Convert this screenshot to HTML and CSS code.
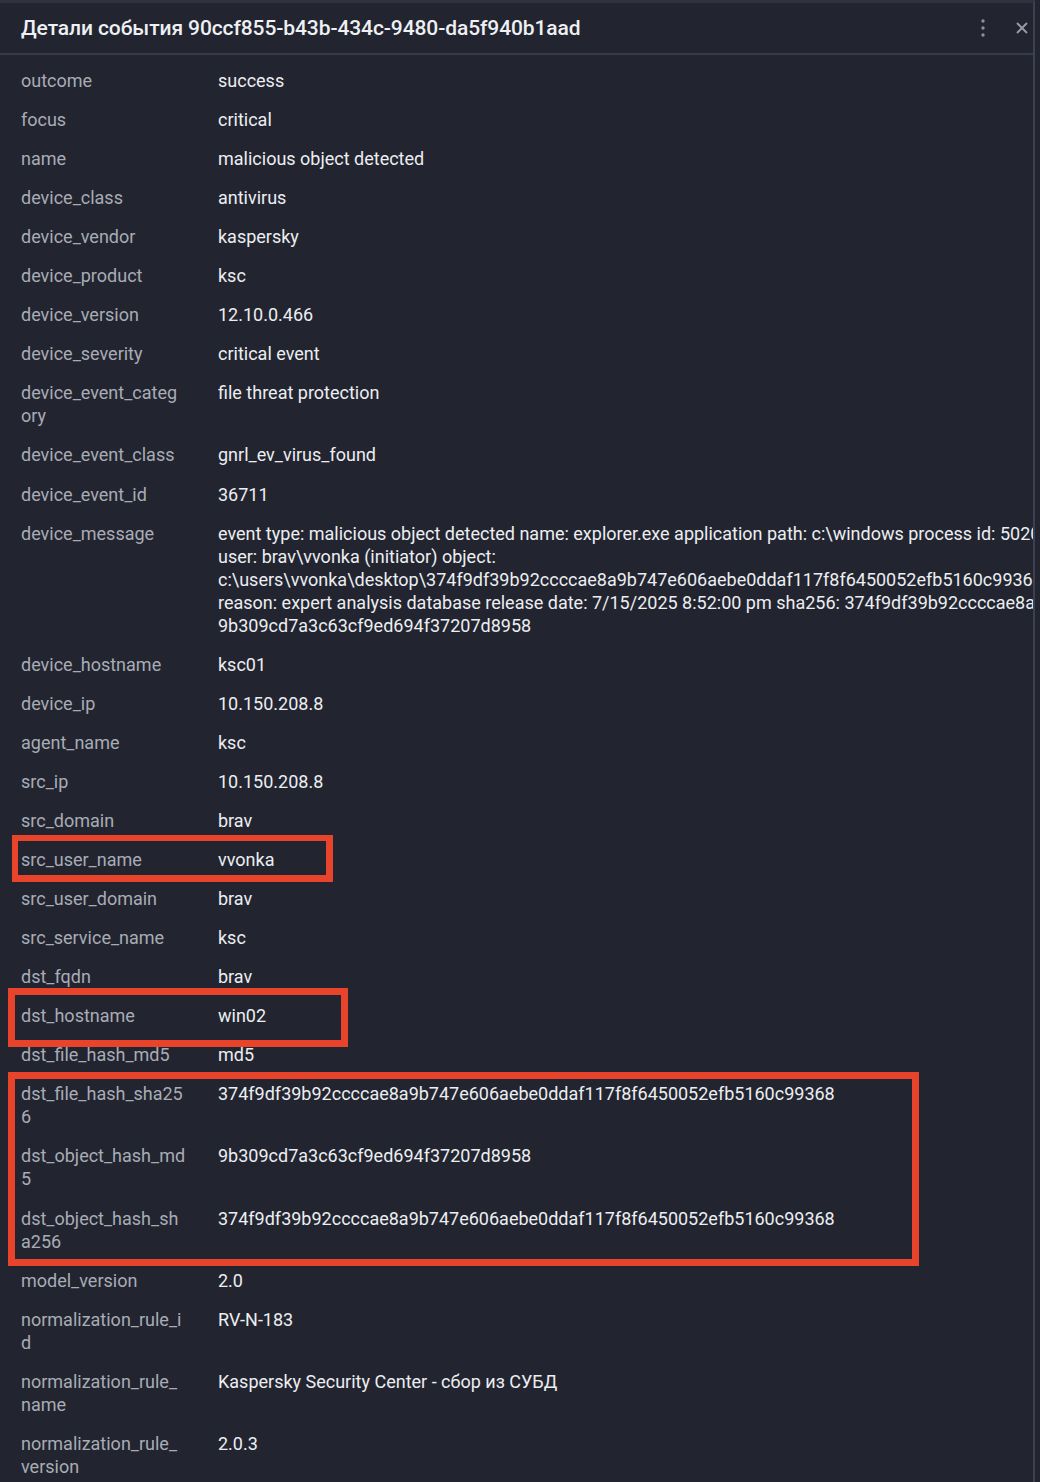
FILE: index.html
```html
<!DOCTYPE html>
<html lang="ru">
<head>
<meta charset="utf-8">
<title>Детали события</title>
<link rel="stylesheet" href="styles.css">
</head>
<body>
<div class="panel">
  <header class="head">
    <h1 class="title">Детали события 90ccf855-b43b-434c-9480-da5f940b1aad</h1>
    <div class="actions">
      <svg class="kebab" width="6" height="20" viewBox="0 0 6 20"><circle cx="3" cy="3" r="1.7"/><circle cx="3" cy="10" r="1.7"/><circle cx="3" cy="17" r="1.7"/></svg>
      <svg class="close" width="14" height="14" viewBox="0 0 14 14"><path d="M2 2L12 12M12 2L2 12"/></svg>
    </div>
  </header>
  <div class="list">
    <div class="row"><div class="k">outcome</div><div class="v">success</div></div>
    <div class="row"><div class="k">focus</div><div class="v">critical</div></div>
    <div class="row"><div class="k">name</div><div class="v">malicious object detected</div></div>
    <div class="row"><div class="k">device_class</div><div class="v">antivirus</div></div>
    <div class="row"><div class="k">device_vendor</div><div class="v">kaspersky</div></div>
    <div class="row"><div class="k">device_product</div><div class="v">ksc</div></div>
    <div class="row"><div class="k">device_version</div><div class="v">12.10.0.466</div></div>
    <div class="row"><div class="k">device_severity</div><div class="v">critical event</div></div>
    <div class="row"><div class="k">device_event_category</div><div class="v">file threat protection</div></div>
    <div class="row"><div class="k">device_event_class</div><div class="v">gnrl_ev_virus_found</div></div>
    <div class="row"><div class="k">device_event_id</div><div class="v">36711</div></div>
    <div class="row"><div class="k">device_message</div><div class="v msg"><span>event type: malicious object detected name: explorer.exe application path: c:\windows process id: 5020</span><span>user: brav\vvonka (initiator) object:</span><span>c:\users\vvonka\desktop\374f9df39b92ccccae8a9b747e606aebe0ddaf117f8f6450052efb5160c99368.exe</span><span>reason: expert analysis database release date: 7/15/2025 8:52:00 pm sha256: 374f9df39b92ccccae8a9b747e606aebe0ddaf117f8f6450052efb5160c99368 md5:</span><span>9b309cd7a3c63cf9ed694f37207d8958</span></div></div>
    <div class="row"><div class="k">device_hostname</div><div class="v">ksc01</div></div>
    <div class="row"><div class="k">device_ip</div><div class="v">10.150.208.8</div></div>
    <div class="row"><div class="k">agent_name</div><div class="v">ksc</div></div>
    <div class="row"><div class="k">src_ip</div><div class="v">10.150.208.8</div></div>
    <div class="row"><div class="k">src_domain</div><div class="v">brav</div></div>
    <div class="row"><div class="k">src_user_name</div><div class="v">vvonka</div></div>
    <div class="row"><div class="k">src_user_domain</div><div class="v">brav</div></div>
    <div class="row"><div class="k">src_service_name</div><div class="v">ksc</div></div>
    <div class="row"><div class="k">dst_fqdn</div><div class="v">brav</div></div>
    <div class="row"><div class="k">dst_hostname</div><div class="v">win02</div></div>
    <div class="row"><div class="k">dst_file_hash_md5</div><div class="v">md5</div></div>
    <div class="row"><div class="k">dst_file_hash_sha256</div><div class="v">374f9df39b92ccccae8a9b747e606aebe0ddaf117f8f6450052efb5160c99368</div></div>
    <div class="row"><div class="k">dst_object_hash_md5</div><div class="v">9b309cd7a3c63cf9ed694f37207d8958</div></div>
    <div class="row"><div class="k">dst_object_hash_sha256</div><div class="v">374f9df39b92ccccae8a9b747e606aebe0ddaf117f8f6450052efb5160c99368</div></div>
    <div class="row"><div class="k">model_version</div><div class="v">2.0</div></div>
    <div class="row"><div class="k">normalization_rule_id</div><div class="v">RV-N-183</div></div>
    <div class="row"><div class="k">normalization_rule_<span class="nb">name</span></div><div class="v">Kaspersky Security Center - сбор из СУБД</div></div>
    <div class="row"><div class="k">normalization_rule_<span class="nb">version</span></div><div class="v">2.0.3</div></div>
  </div>
  <div class="mark mark-user"></div>
  <div class="mark mark-host"></div>
  <div class="mark mark-hash"></div>
</div>
</body>
</html>
```

FILE: styles.css
```css
html, body {
  margin: 0;
  padding: 0;
  background: #222530;
}
body {
  width: 1040px;
  height: 1482px;
  overflow: hidden;
  font-family: Roboto, "Noto Sans", "Liberation Sans", sans-serif;
}
.panel {
  position: relative;
  width: 1035px;
  height: 1482px;
  box-sizing: border-box;
  border-top: 3px solid #30333f;
  border-right: 2px solid #3c4052;
  overflow: hidden;
  background: #222530;
}
.head {
  display: flex;
  align-items: center;
  justify-content: space-between;
  height: 50px;
  padding: 0 0 0 21px;
  border-bottom: 2px solid #363a4a;
}
.title {
  margin: 0;
  font-size: 21px;
  font-weight: 500;
  color: #eef0f3;
  letter-spacing: -0.1px;
}
.actions {
  display: flex;
  align-items: center;
  gap: 29px;
  padding-right: 4px;
}
.kebab circle { fill: #8e919c; }
.close path { stroke: #9a9da8; stroke-width: 1.8; fill: none; }
.list {
  padding-top: 6px;
}
.row {
  display: grid;
  grid-template-columns: 165px 1fr;
  column-gap: 32px;
  padding: 8px 0 8px 21px;
  font-size: 18px;
  line-height: 23.05px;
}
.k {
  color: #a9acb5;
  word-break: break-all;
}
.nb {
  white-space: nowrap;
}
.v {
  color: #eceef1;
  white-space: nowrap;
}
.msg span {
  display: block;
}
.mark {
  position: absolute;
  border: 7px solid #e8432b;
  box-sizing: border-box;
}
.mark-user { left: 12px; top: 832px; width: 321px; height: 47px; border-width: 6px 7px 7px 6px; }
.mark-host { left: 8px; top: 985px; width: 340px; height: 59px; }
.mark-hash { left: 8px; top: 1069px; width: 911px; height: 194px; }
```
